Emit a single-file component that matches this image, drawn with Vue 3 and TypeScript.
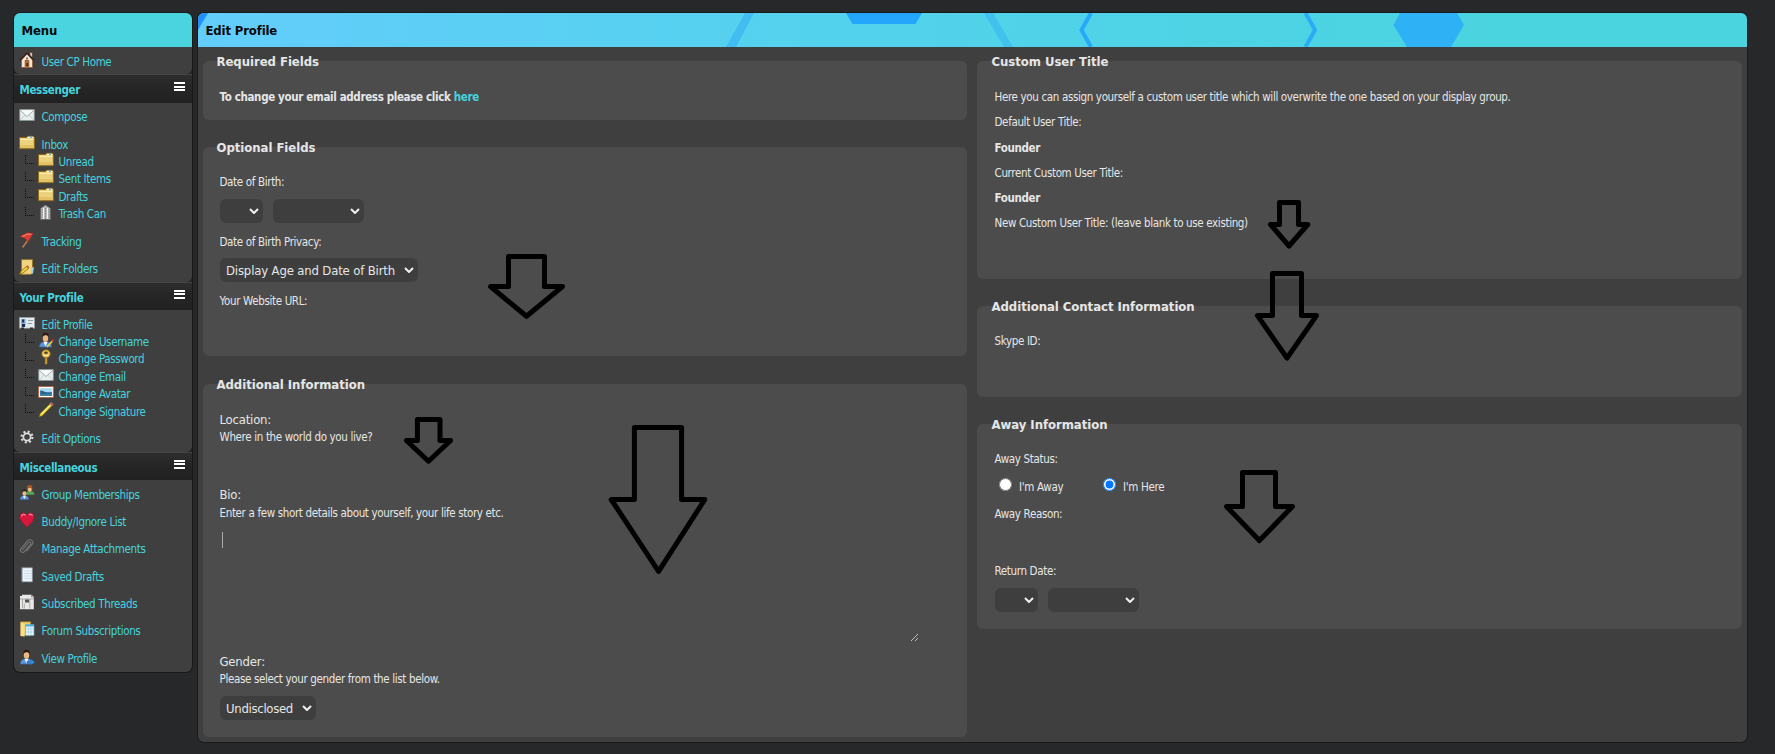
<script setup lang="ts">
interface MenuItem {
  label: string
  icon: string
  children?: { label: string; icon: string }[]
}
interface MenuSection {
  title: string
  items: MenuItem[]
}

const home: MenuItem[] = [{ label: 'User CP Home', icon: 'house' }]

const sections: MenuSection[] = [
  {
    title: 'Messenger',
    items: [
      { label: 'Compose', icon: 'mail' },
      {
        label: 'Inbox',
        icon: 'folder',
        children: [
          { label: 'Unread', icon: 'folder' },
          { label: 'Sent Items', icon: 'folder' },
          { label: 'Drafts', icon: 'folder' },
          { label: 'Trash Can', icon: 'trash' },
        ],
      },
      { label: 'Tracking', icon: 'flag' },
      { label: 'Edit Folders', icon: 'folderEdit' },
    ],
  },
  {
    title: 'Your Profile',
    items: [
      {
        label: 'Edit Profile',
        icon: 'card',
        children: [
          { label: 'Change Username', icon: 'userEdit' },
          { label: 'Change Password', icon: 'key' },
          { label: 'Change Email', icon: 'mail' },
          { label: 'Change Avatar', icon: 'picture' },
          { label: 'Change Signature', icon: 'pencil' },
        ],
      },
      { label: 'Edit Options', icon: 'gear' },
    ],
  },
  {
    title: 'Miscellaneous',
    items: [
      { label: 'Group Memberships', icon: 'group' },
      { label: 'Buddy/Ignore List', icon: 'heart' },
      { label: 'Manage Attachments', icon: 'clip' },
      { label: 'Saved Drafts', icon: 'notebook' },
      { label: 'Subscribed Threads', icon: 'newspaper' },
      { label: 'Forum Subscriptions', icon: 'folderTable' },
      { label: 'View Profile', icon: 'userGo' },
    ],
  },
]

const userShape =
  '<path d="M1.5 15c0-3.500 2-4.800 4.500-5.200h3c2.500.4 4.500 1.700 4.500 5.200z" fill="#5b97dc" stroke="#3b6aa4" stroke-width=".7"/><path d="M5.500 10l2 4.500 2-4.500z" fill="#f2f6fb"/><ellipse cx="7.500" cy="6" rx="2.700" ry="3.900" fill="#eab883"/><path d="M4.500 5.500C4 2 5.500.8 7.500.8s3.700 1 3 4.700C9.800 3.600 8.800 3.200 7.500 3.300 6 3.200 5.200 4 4.500 5.500z" fill="#2c1a11"/>'
const folderShape =
  '<path d="M.5 2.500h7l1-1.200h6l.8 1.200v11.200H.5z" fill="#ecd27d" stroke="#8d6a1c"/><path d="M9 2.300h5" stroke="#eef8fb" stroke-width="1.300"/><path d="M11 2.300h2" stroke="#4ba6d2"/><path d="M1.500 4.500h13" stroke="#fbeeb0"/><path d="M1 10h14v3H1z" fill="#e3c265"/>'
const pencilShape =
  '<path d="M1 15L2.200 11.500 12 1.700l2 2L4.500 13.700z" fill="#f1d93a" stroke="#6f5d15" stroke-width=".8"/><path d="M3 12.200l9-9" stroke="#fff8a8"/><path d="M12 1.700l1.300-1.200 2 2L14 3.700z" fill="#dc3636" stroke="#eee" stroke-width=".4"/>'

const icons: Record<string, string> = {
  house:
    '<path d="M2.500 8v7.500h11V8L8 2z" fill="#f4e7da" stroke="#8b5a3a" stroke-width=".8"/><path d="M11 .5h2.200V6l-2.200-2z" fill="#efe2d6" stroke="#5e3a27" stroke-width=".6"/><path d="M.6 8.500L8 1l7.400 7.500" fill="none" stroke="#34251f" stroke-width="1.500"/><path d="M5.700 15.500V8h4.600v7.500z" fill="#a8672c"/><path d="M7.300 5.500h1.400v2H7.300zM7.200 11h2v3h-2z" fill="#573014"/>',
  mail:
    '<path d="M.7 2.500h14.600v11H.7z" fill="#e7ecec" stroke="#87969b" stroke-width=".7"/><path d="M1.200 13l5-5M14.800 13l-5-5" stroke="#c4cdcf"/><path d="M1 3.200l7 6.300 7-6.300" fill="#f8f9f9" stroke="#a0acb0"/>',
  folder: folderShape,
  trash:
    '<path d="M2.500 4.500L4.500 3l3-2 3 2 2 1.500v11h-10z" fill="#b7b8b9" stroke="#5e5e5e" stroke-width=".7"/><path d="M5.500 4v11M9.500 4v11" stroke="#f2f2f2"/><path d="M4 5v10M7.500 4v11M11.200 5v10" stroke="#7e7e7e" stroke-dasharray="1.500 1"/>',
  flag:
    '<path d="M12 4L3.500 15.500" stroke="#bd7d4a" stroke-width="1.500"/><path d="M.8 4.600L8.200.8l6.500.8-2.200 1.800-3.500 6.300-2.700-3.300z" fill="#df3e36" stroke="#a82320" stroke-width=".6"/><path d="M3 4.500L8.500 2l4 .3" stroke="#f58a80" fill="none"/>',
  folderEdit:
    '<path d="M2.500.6h11v12.800l-2 2h-9z" fill="#f0d580" stroke="#927025" stroke-width=".8"/><path d="M12.500 9l2.500-1-1 6.500-2 .8z" fill="#9bd2e6"/><path d="M.5 15.500L2 12l6-5 2 2-6 5z" fill="#efcf3a" stroke="#795c12" stroke-width=".7"/><path d="M7 7.500L8.500 6.300l1.500 1.800L9 9.500z" fill="#d94e43"/>',
  card:
    '<path d="M.5 2.500h15v10.700H.5z" fill="#e3eaee" stroke="#9aa5a9" stroke-width=".6"/><path d="M2 4h4.500v7.500H2z" fill="#8ab1d1"/><path d="M3 9h3v3H3zM3.200 4.500h2v3h-2z" fill="#1b2b4e"/><path d="M9 5.500h5M8.500 8.500H13" stroke="#8c9dac"/><path d="M2 12.500h3v2H2zM11 12.500h3v2h-3z" fill="#303436"/>',
  userEdit: userShape + '<path d="M9 15l5.500-6" stroke="#edce3a" stroke-width="1.800"/><path d="M14 9.500l1.500-2" stroke="#d43a31" stroke-width="1.600"/>',
  key:
    '<path d="M7 8.500h2.200v5.800L8 15.700 7 14.500z" fill="#d9a634" stroke="#775414" stroke-width=".6"/><ellipse cx="8" cy="4.800" rx="4.300" ry="4" fill="#efc457" stroke="#896119" stroke-width=".8"/><ellipse cx="8" cy="3.800" rx="1.800" ry="1.200" fill="#48412e"/><path d="M5 6.500h6" stroke="#fbe59c"/>',
  picture:
    '<path d="M.6 2.500h14.800v11H.6z" fill="#fff" stroke="#ad6941" stroke-width="1"/><path d="M2.200 4.200h11.600v7.600H2.200z" fill="#a5daf3"/><path d="M2.200 6.500c3 0 4 2.500 11.600 1.500v3.800H2.200z" fill="#28608f"/><path d="M2.200 10c4 0 7-.5 11.600-.5v2.300H2.200z" fill="#3b7f9c"/>',
  pencil: pencilShape,
  gear:
    '<circle cx="8" cy="8" r="5.400" fill="none" stroke="#dedede" stroke-width="2.200" stroke-dasharray="2 2.241"/><circle cx="8" cy="8" r="3.600" fill="none" stroke="#dedede" stroke-width="1.700"/>',
  group:
    '<g transform="translate(5.500 0) scale(.7)"><path d="M1 14c0-4 2-5 4.500-5h4c2.500 0 4.500 1 4.500 5z" fill="#54a659"/><ellipse cx="7.500" cy="5.500" rx="3" ry="4.200" fill="#f0bd82"/><path d="M4 7C3 0 5.500 0 7.500 0S12 0 11 7C10 3 5 3 4 7z" fill="#a7571c"/></g><g transform="translate(0 3.800) scale(.72)">' +
    userShape +
    '</g>',
  heart:
    '<path d="M8 15.500C5.500 12 .8 9.500.8 4.800.8 2.200 2.500.9 4.500.9 6.300.9 7.500 2 8 3.200 8.500 2 9.700.9 11.500.9c2 0 3.700 1.300 3.700 3.900C15.200 9.500 10.500 12 8 15.500z" fill="#d7173b" stroke="#98172c" stroke-width=".6"/><path d="M2.500 4.500C3 2 5.500 1.800 6.500 3.500M10 3c1-1.200 3-.8 3.500.8" fill="none" stroke="#f27c90" stroke-width="1.400"/>',
  clip:
    '<path d="M3.500 10.800L9.700 3.500c1-1.200 3 0 2 1.500L5.500 12.600c-2 2-5.300-.3-3.700-2.700L8.600 1.900c2.700-2.800 7 .3 4.700 3.300L7.500 12" fill="none" stroke="#777" stroke-width="1.100"/>',
  notebook:
    '<path d="M2.800.8h10.500v14H2.800z" fill="#eff5fb" stroke="#91a4af" stroke-width=".6"/><path d="M5 4h8M5 6.500h8M5 9h8M5 11.500h8" stroke="#c9daea"/><path d="M3 1.500V15" stroke="#43515e" stroke-width="1.200" stroke-dasharray="1 1"/>',
  newspaper:
    '<path d="M1 2h2V.8h9.500L14.800 3v12.200H1z" fill="#e9e9e7"/><path d="M1 5h13.500" stroke="#999" stroke-width=".8"/><path d="M6 5.500h4v3H6z" fill="#4f5457"/><path d="M3.500 5v9.500M5.300 9.500v5M10.800 5v9.500" stroke="#9a9a98" stroke-width=".8"/><path d="M12.500.8V3h2.300" fill="none" stroke="#777" stroke-width=".7"/>',
  folderTable:
    '<path d="M1.800.7h10v14h-10z" fill="#eccf6c" stroke="#8c6b1e" stroke-width=".8"/><path d="M1.500 1v14l4 .6V3z" fill="#f7dd88"/><path d="M6.500 3.700H15v10.800H6.500z" fill="#edf7fc" stroke="#689fbc" stroke-width=".7"/><path d="M6.700 4.700h8.100" stroke="#40ace5" stroke-width="1.800"/><path d="M6.500 8h8M6.500 11h8M9.300 6v8M12 6v8" stroke="#9acde5" stroke-width=".7"/>',
  userGo: userShape + '<path d="M8 12.200h4V10l3.700 3.200L12 16v-2H8z" fill="#3990df" stroke="#205d9e" stroke-width=".5"/>',
}

// Downward marker arrows: shaft left/right/top, head left/right/shoulder, tip x/y
const arrows: number[][] = [
  [508.5, 544.5, 256.5, 490.5, 562.5, 286.5, 526.5, 316.3],
  [417.4, 440, 419.5, 406.4, 450.6, 440.5, 428.5, 461.3],
  [634.4, 681.6, 427.5, 611.2, 704.8, 499.5, 658.6, 571.3],
  [1279.5, 1298.5, 202.5, 1270.5, 1307.8, 224.5, 1289, 246],
  [1272.5, 1301.5, 273.5, 1257.5, 1316.5, 315.6, 1287, 358],
  [1242.5, 1275.5, 472.5, 1226.5, 1292.5, 506.5, 1259.4, 540.6],
]
const arrowPoints = (a: number[]): string =>
  `${a[0]},${a[2]} ${a[1]},${a[2]} ${a[1]},${a[5]} ${a[4]},${a[5]} ${a[6]},${a[7]} ${a[3]},${a[5]} ${a[0]},${a[5]}`
</script>

<template>
  <div class="page">
    <nav class="menu">
      <div class="thead menu-head">Menu</div>
      <div class="group">
        <div v-for="item in home" :key="item.label" class="item">
          <div class="line">
            <svg class="icon" viewBox="0 0 16 16" v-html="icons[item.icon]"></svg>
            <a>{{ item.label }}</a>
          </div>
        </div>
      </div>
      <template v-for="section in sections" :key="section.title">
        <div class="section-head">
          <a>{{ section.title }}</a>
          <span class="bars"><i></i><i></i><i></i></span>
        </div>
        <div class="group">
          <div v-for="item in section.items" :key="item.label" class="item">
            <div class="line">
              <svg class="icon" viewBox="0 0 16 16" v-html="icons[item.icon]"></svg>
              <a>{{ item.label }}</a>
            </div>
            <div v-for="child in item.children" :key="child.label" class="line sub">
              <span class="branch"></span>
              <svg class="icon" viewBox="0 0 16 16" v-html="icons[child.icon]"></svg>
              <a>{{ child.label }}</a>
            </div>
          </div>
        </div>
      </template>
    </nav>

    <main class="panel">
      <div class="thead panel-head">
        <svg class="art" viewBox="198 13 1549 34" preserveAspectRatio="none">
          <path d="M198 13h10l-10 17z" fill="#218ffd" />
          <path d="M745 13h9l-18 34h-10z" fill="#42bdf1" />
          <path d="M846 13h76l-6.500 11h-63z" fill="#23a6fb" />
          <path d="M984 13h9l20 34h-9z" fill="#41c1ee" />
          <path d="M1091 13l-9.500 17 9.500 17" fill="none" stroke="#25aaf9" stroke-width="4" />
          <path d="M1305.500 13l9.500 17-9.500 17" fill="none" stroke="#2aabf8" stroke-width="4" />
          <path d="M1400 13h57l7 12-13 22h-44l-13.500-22z" fill="#2fb1f5" />
        </svg>
        <span>Edit Profile</span>
      </div>
      <div class="columns">
        <div class="column">
          <section class="box required">
            <h2>Required Fields</h2>
            <p class="strong">To change your email address please click <a>here</a></p>
          </section>
          <section class="box optional">
            <h2>Optional Fields</h2>
            <p>Date of Birth:</p>
            <div class="controls">
              <span class="select day"><svg viewBox="0 0 10 6"><path d="M1 1l4 4 4-4" /></svg></span>
              <span class="select month"><svg viewBox="0 0 10 6"><path d="M1 1l4 4 4-4" /></svg></span>
            </div>
            <p>Date of Birth Privacy:</p>
            <div class="controls privacy">
              <span class="select age">Display Age and Date of Birth<svg viewBox="0 0 10 6"><path d="M1 1l4 4 4-4" /></svg></span>
            </div>
            <p>Your Website URL:</p>
          </section>
          <section class="box additional">
            <h2>Additional Information</h2>
            <p class="field">Location:</p>
            <p>Where in the world do you live?</p>
            <p class="field bio">Bio:</p>
            <p class="hint">Enter a few short details about yourself, your life story etc.</p>
            <div class="editor">
              <span class="caret"></span>
              <svg class="grip" viewBox="0 0 9 9"><path d="M1 8l7-7M5 8l3-3" /></svg>
            </div>
            <p class="field">Gender:</p>
            <p>Please select your gender from the list below.</p>
            <div class="controls gender">
              <span class="select sex">Undisclosed<svg viewBox="0 0 10 6"><path d="M1 1l4 4 4-4" /></svg></span>
            </div>
          </section>
        </div>
        <div class="column">
          <section class="box custom">
            <h2>Custom User Title</h2>
            <p>Here you can assign yourself a custom user title which will overwrite the one based on your display group.</p>
            <p>Default User Title:</p>
            <p class="strong">Founder</p>
            <p>Current Custom User Title:</p>
            <p class="strong">Founder</p>
            <p>New Custom User Title: (leave blank to use existing)</p>
          </section>
          <section class="box contact">
            <h2>Additional Contact Information</h2>
            <p>Skype ID:</p>
          </section>
          <section class="box away">
            <h2>Away Information</h2>
            <p>Away Status:</p>
            <div class="radios">
              <label><input type="radio" name="away" /><span>I'm Away</span></label>
              <label><input type="radio" name="away" checked /><span>I'm Here</span></label>
            </div>
            <p>Away Reason:</p>
            <p class="return">Return Date:</p>
            <div class="controls">
              <span class="select day"><svg viewBox="0 0 10 6"><path d="M1 1l4 4 4-4" /></svg></span>
              <span class="select month"><svg viewBox="0 0 10 6"><path d="M1 1l4 4 4-4" /></svg></span>
            </div>
          </section>
        </div>
      </div>
    </main>

    <svg class="markers" viewBox="0 0 1775 754">
      <polygon v-for="(a, i) in arrows" :key="i" :points="arrowPoints(a)" />
    </svg>
  </div>
</template>

<style>
body {
  background: #27282a;
}
</style>

<style scoped>
.page {
  position: relative;
  box-sizing: border-box;
  width: 1775px;
  height: 754px;
  padding: 13px 28px 0 14px;
  display: flex;
  align-items: flex-start;
  gap: 6px;
  background: #27282a;
  color: #e6e6e6;
  font-family: 'DejaVu Sans Condensed', 'DejaVu Sans', sans-serif;
  font-stretch: condensed;
  font-size: 11.500px;
  overflow: hidden;
}
a {
  color: #45d3df;
}
.menu,
.panel {
  border-radius: 6px;
  background: #3f3f3f;
  box-shadow: 0 0 0 1px #19191a;
  overflow: hidden;
}
.menu {
  width: 178px;
  flex: none;
}
.thead {
  height: 34px;
  line-height: 35px;
  box-sizing: border-box;
  color: #0a0a0a;
  font-size: 13px;
  font-weight: bold;
  letter-spacing: -0.15px;
}
.menu-head {
  padding-left: 7.500px;
  background: #4ad4df;
}
.item {
  padding: 5px 0;
}
.line {
  height: 17.400px;
  display: flex;
  align-items: center;
  padding-left: 5px;
  font-size: 11.500px;
  letter-spacing: -0.36px;
  white-space: nowrap;
}
.line a {
  margin-top: 2px;
}
.icon {
  width: 16px;
  height: 16px;
  flex: none;
  margin: -2px 6.500px 0 0;
  overflow: visible;
}
.sub {
  padding-left: 11px;
}
.sub .icon {
  margin-right: 4.500px;
}
.branch {
  width: 8px;
  height: 8px;
  margin: -4px 4px 0 0;
  flex: none;
  border-left: 1px dotted #0c0c0c;
  border-bottom: 1px dotted #0c0c0c;
}
.group {
  border-radius: 0 0 6px 6px;
  background: #3f3f3f;
}
.menu {
  background: #222;
}
.section-head {
  height: 28.200px;
  box-sizing: border-box;
  border-top: 1px solid #444;
  display: flex;
  justify-content: space-between;
  padding: 0 7px 0 5.500px;
  background: linear-gradient(#2d2d2d, #242424 60%, #212121);
  line-height: 30px;
  font-size: 11.500px;
  font-weight: bold;
  letter-spacing: -0.35px;
}
.bars {
  width: 11px;
  height: 9px;
  margin-top: 7px;
  display: flex;
  flex-direction: column;
  justify-content: space-between;
}
.bars i {
  height: 2px;
  background: #fff;
}
.panel {
  flex: 1;
  height: 729px;
}
.panel-head {
  position: relative;
  padding-left: 7.500px;
  background: linear-gradient(90deg, #63cdfb, #53d2ed 40%, #4ad4df 85%);
}
.panel-head span {
  position: relative;
}
.art {
  position: absolute;
  inset: 0;
  width: 100%;
  height: 100%;
}
.columns {
  display: grid;
  grid-template-columns: 764px 765px;
  gap: 10px;
  padding: 14px 5px 0;
}
.column {
  display: flex;
  flex-direction: column;
  gap: 27px;
}
.box {
  box-sizing: border-box;
  padding: 0 17px 0 16.500px;
  border-radius: 6px;
  background: #4c4c4c;
}
h2 {
  margin: -8px 0 0 -3px;
  height: 18px;
  line-height: 18px;
  font-size: 13px;
  font-weight: bold;
  letter-spacing: -0.04px;
}
.custom,
.contact,
.away {
  padding-left: 17.500px;
}
p {
  margin: 0;
  height: 16px;
  line-height: 18px;
  letter-spacing: -0.35px;
  white-space: nowrap;
}
.strong {
  font-weight: bold;
}
.required { height: 59px; }
.optional { height: 209px; }
.additional { height: 353px; margin-top: 1px; }
.custom { height: 218px; }
.contact { height: 91px; }
.away { height: 205px; }
.required p,
.custom p:nth-of-type(1) {
  margin-top: 17px;
}
.custom p {
  margin-top: 9.300px;
}
.optional h2 + p,
.contact p,
.away h2 + p {
  margin-top: 16px;
}
.controls {
  display: flex;
  gap: 10px;
  margin: 10px 0;
}
.controls.privacy {
  margin: 9px 0 10px;
}
.select {
  box-sizing: border-box;
  height: 24px;
  display: flex;
  align-items: center;
  justify-content: space-between;
  padding: 0 4px 0 6.500px;
  border-radius: 6px;
  background: #3e3e3e;
  font-size: 13px;
  letter-spacing: -0.3px;
  white-space: nowrap;
}
.select svg {
  width: 10px;
  height: 6px;
  margin-left: auto;
  fill: none;
  stroke: #f0f0f0;
  stroke-width: 2;
}
.day { width: 43px; }
.month { width: 91px; }
.age {
  width: 198px;
  letter-spacing: -0.16px;
}
.sex { width: 96px; }
.field {
  font-size: 13px;
  line-height: 16px;
  letter-spacing: -0.2px;
}
.additional h2 + p {
  margin-top: 18px;
}
.bio {
  margin-top: 43px;
}
.hint {
  margin-top: 1px;
}
.editor {
  height: 113px;
  width: 699px;
  margin-top: 9px;
  margin-bottom: 12px;
  padding: 3px 0 0 2.500px;
  box-sizing: border-box;
  display: flex;
  justify-content: space-between;
}
.caret {
  width: 1px;
  height: 16px;
  background: #aaa;
}
.grip {
  align-self: flex-end;
  width: 9px;
  height: 9px;
  fill: none;
  stroke: #ddd;
  stroke-width: 0.8;
}
.radios {
  display: flex;
  height: 17px;
  margin: 12px 0 10px;
}
.radios label {
  width: 104px;
  display: flex;
  font-size: 11.500px;
  letter-spacing: -0.3px;
}
.radios input {
  width: 13px;
  height: 13px;
  margin: 0 7px 0 4.500px;
}
.radios span {
  line-height: 18px;
}
.return {
  margin-top: 41px;
}
.markers {
  position: absolute;
  left: 0;
  top: 0;
  width: 1775px;
  height: 754px;
  pointer-events: none;
}
.markers polygon {
  fill: none;
  stroke: #000;
  stroke-width: 5;
  stroke-linejoin: round;
}
</style>
